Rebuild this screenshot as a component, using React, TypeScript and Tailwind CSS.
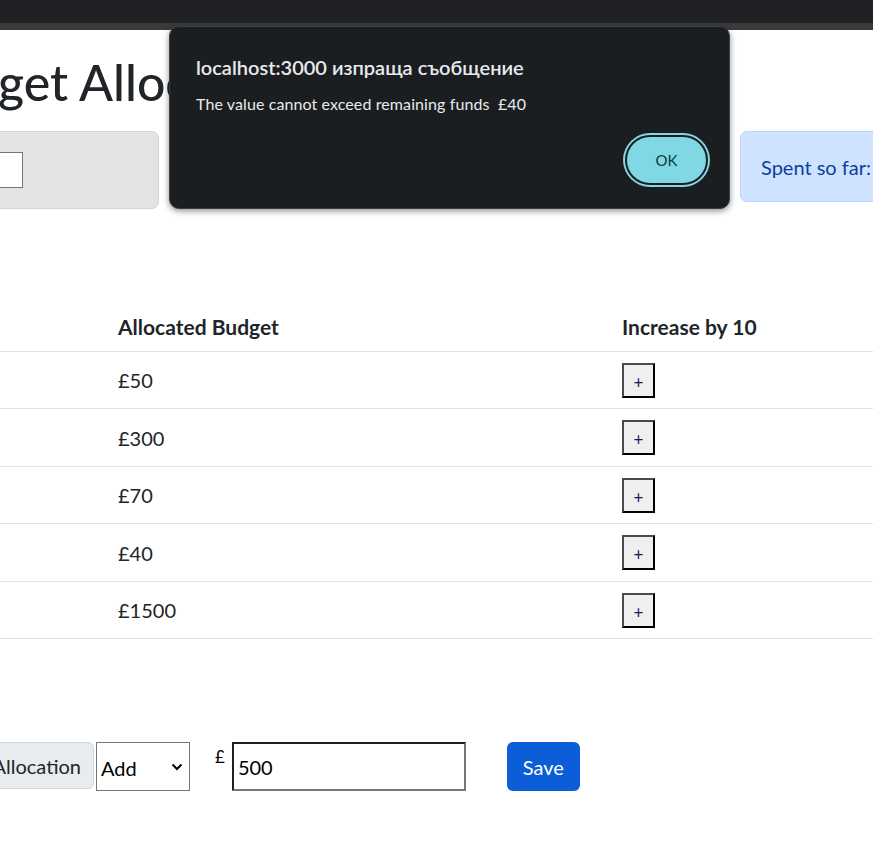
import { useState } from "react";

const rows = [
  { amount: "£50", h: "h-[57px]" },
  { amount: "£300", h: "h-[58px]" },
  { amount: "£70", h: "h-[57px]" },
  { amount: "£40", h: "h-[58px]" },
  { amount: "£1500", h: "h-[57px]" },
];

const PlusButton = () => (
  <button className="w-[33px] h-[35px] bg-[#efefef] border-2 border-[#4a4a4a] border-r-black border-b-black text-[17px] leading-none text-[#1a1a5a] flex items-center justify-center pt-[4px]">
    +
  </button>
);

const AlertDialog = () => (
  <div className="absolute left-[169px] top-[26px] w-[561px] h-[183px] rounded-[10px] bg-[#1b1e20] border border-[#3c4043] shadow-[0_2px_6px_rgba(0,0,0,0.45)] pl-[26px] pr-[20px] pt-[27px] font-['Lato','Noto_Sans',sans-serif]">
    <p className="text-[20px] font-semibold text-[#e8eaed] leading-[26px]">
      localhost:3000 изпраща съобщение
    </p>
    <p className="mt-[13px] text-[16px] tracking-[0.1px] text-[#e8eaed] leading-[22px] whitespace-pre">
      The value cannot exceed remaining funds  £40
    </p>
    <div className="flex justify-end mt-[20px] pr-[1px]">
      <button className="w-[83px] h-[50px] rounded-full bg-[#7fd8e4] border-2 border-[#1b1e20] ring-2 ring-[#7fd8e4] text-[15px] text-[#0e3a44]">
        OK
      </button>
    </div>
  </div>
);

export default function App() {
  const [value] = useState("500");

  return (
    <div className="relative w-[873px] h-[855px] overflow-hidden bg-white text-[#212529] font-['Lato','Noto_Sans',sans-serif]">
      <div className="h-[23px] bg-[#202124]" />
      <div className="h-[7px] bg-[#3b3b3b]" />

      <h1 className="mt-[22px] -ml-[2px] text-[50px] leading-[60px] font-medium whitespace-nowrap">
        get Allocation
      </h1>

      <div className="mt-[19px] flex items-start">
        <div className="shrink-0 -ml-[20px] w-[179px] h-[78px] rounded-[7px] bg-[#e2e3e5] border border-[#d3d6d8] flex items-center">
          <div className="ml-[-1px] w-[43px] h-[36px] bg-white border border-[#767676]" />
        </div>
        <div className="shrink-0 ml-[581px] w-[160px] h-[71px] rounded-[7px] bg-[#cfe2ff] border border-[#b6d4fe] flex items-center pl-[20px] text-[20px] text-[#084298] whitespace-nowrap">
          Spent so far:
        </div>
      </div>

      <div className="mt-[93px]">
        <div className="grid grid-cols-[110px_504px_1fr] h-[50px] items-center border-b border-[#dee2e6] font-bold text-[21px]">
          <div />
          <div className="px-[8px]">Allocated Budget</div>
          <div className="px-[8px]">Increase by 10</div>
        </div>
        {rows.map((r) => (
          <div
            key={r.amount}
            className={`grid grid-cols-[110px_504px_1fr] ${r.h} items-center border-b border-[#dee2e6] text-[20px]`}
          >
            <div />
            <div className="px-[8px]">{r.amount}</div>
            <div className="px-[8px]">
              <PlusButton />
            </div>
          </div>
        ))}
      </div>

      <div className="mt-[103px] flex items-start">
        <div className="shrink-0 -ml-[16px] w-[110px] h-[47px] rounded-[6px] bg-[#e9ecef] border border-[#ced4da] flex items-center justify-end pr-[12px] text-[20px] whitespace-nowrap">
          Allocation
        </div>
        <div className="shrink-0 ml-[2px] w-[94px] h-[49px] bg-white border border-[#767676] flex items-center justify-between pl-[4px] pr-[6px] text-[20px] text-black">
          <span className="mt-[3px]">Add</span>
          <svg width="12" height="8" viewBox="0 0 12 8" fill="none">
            <path d="M1.5 1.5 L6 6 L10.5 1.5" stroke="#000" strokeWidth="2" />
          </svg>
        </div>
        <span className="ml-[25px] text-[17px] leading-[26px] mt-[2px] text-black">£</span>
        <input
          readOnly
          value={value}
          className="shrink-0 ml-[7px] w-[234px] h-[49px] border-2 border-[#1f1f1f] border-b-[#767676] border-r-[#767676] px-[4px] text-[20px] text-black outline-none"
        />
        <button className="shrink-0 ml-[41px] w-[73px] h-[49px] rounded-[6px] bg-[#0b5ed7] text-white text-[20px]">
          Save
        </button>
      </div>

      <AlertDialog />
    </div>
  );
}
